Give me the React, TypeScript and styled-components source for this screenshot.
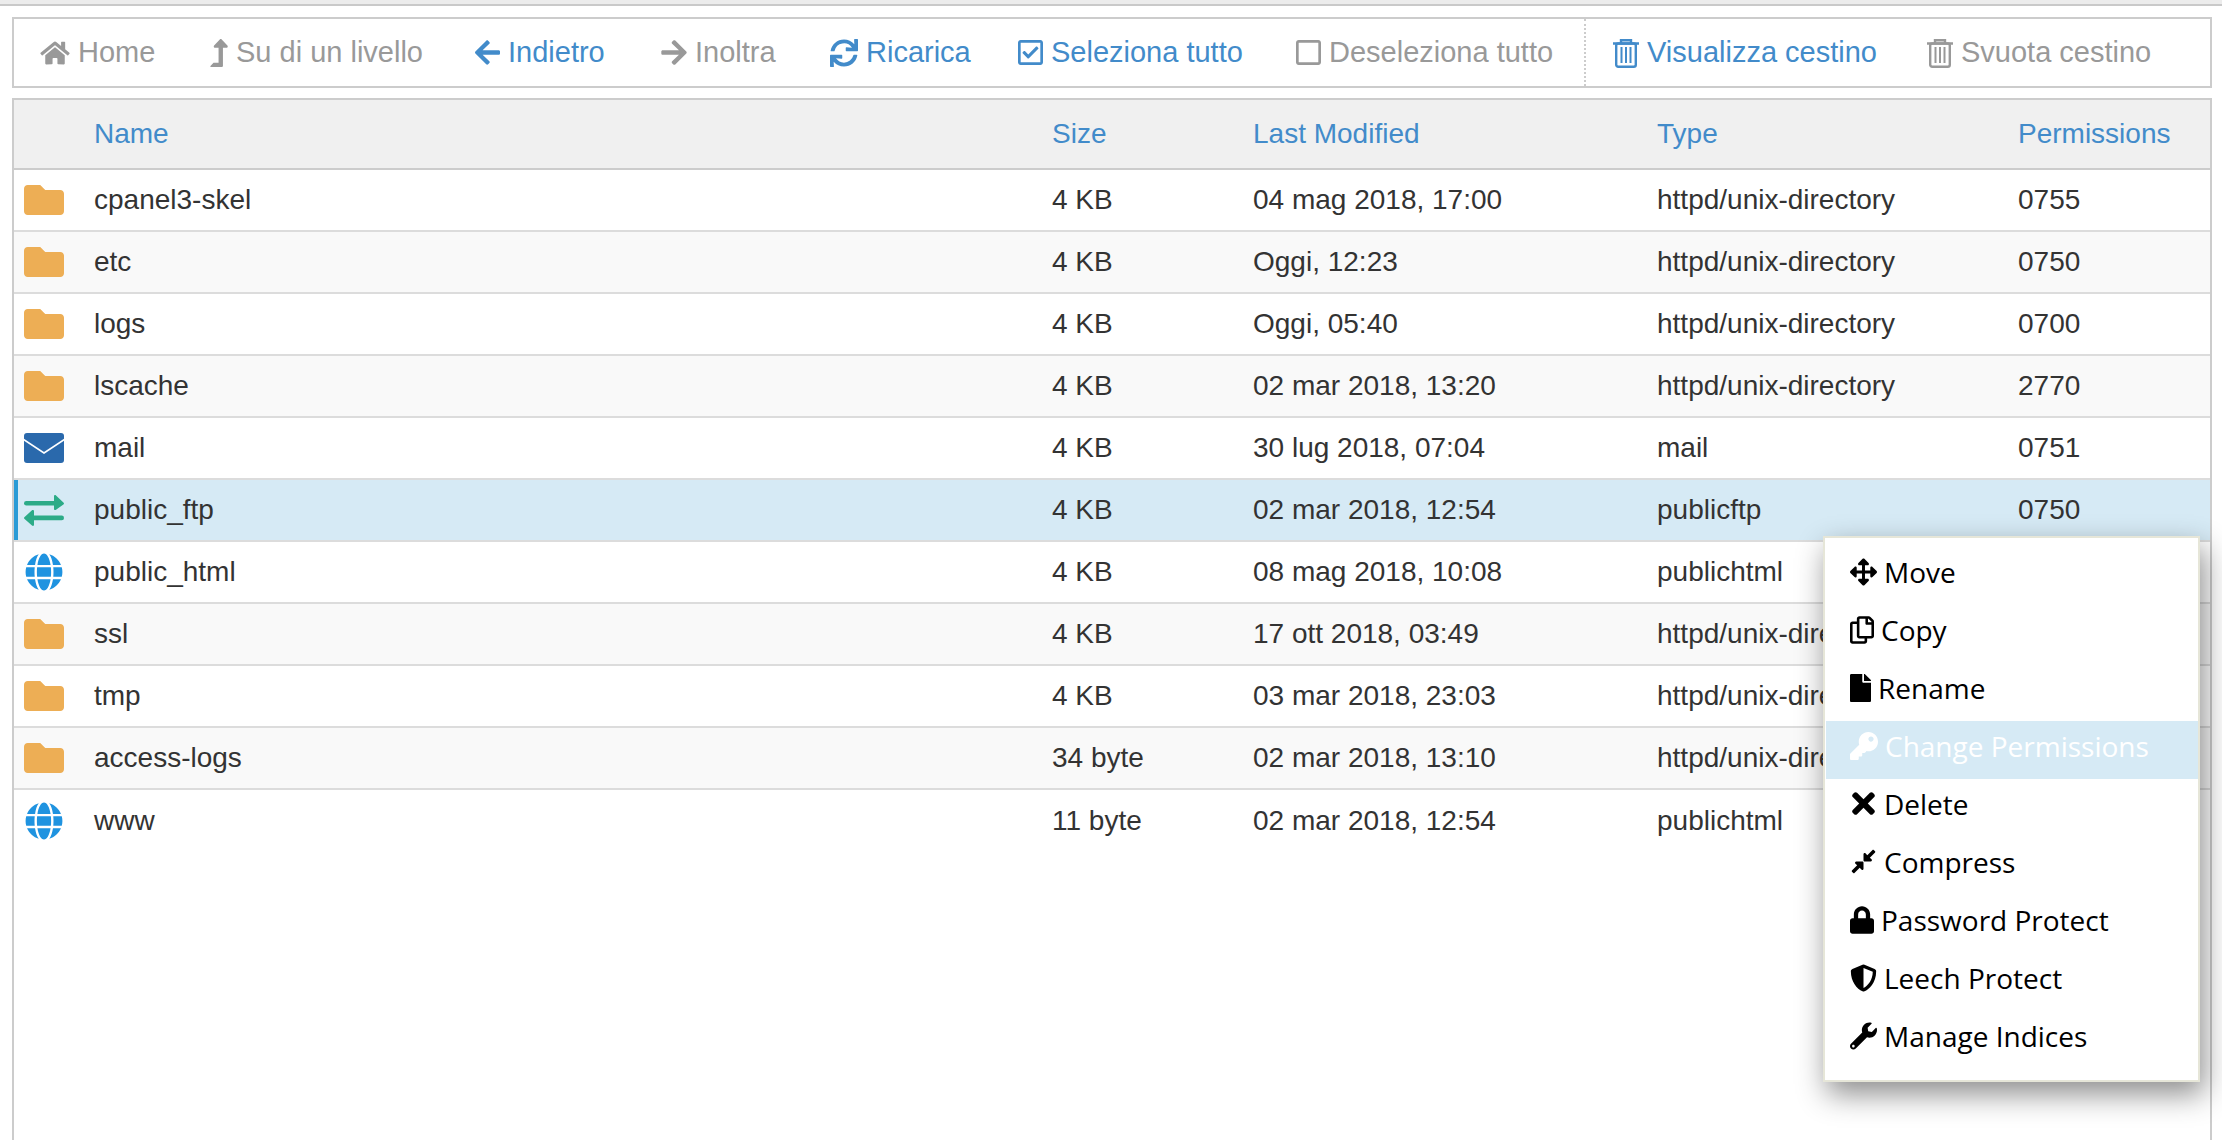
import styled, { createGlobalStyle } from "styled-components";
import {
  FaHome, FaLevelUpAlt, FaArrowLeft, FaArrowRight, FaSync, FaRegCheckSquare, FaRegSquare,
  FaFolder, FaGlobe, FaArrowsAlt, FaRegCopy, FaFile, FaKey, FaTimes, FaCompressAlt,
  FaLock, FaShieldAlt, FaWrench,
} from "react-icons/fa";
import type { ReactNode } from "react";

const GlobalStyle = createGlobalStyle`
  html, body { margin: 0; padding: 0; background: #fff; }
  body { font-family: "Liberation Sans", Arial, sans-serif; color: #333; overflow: hidden; }
`;

const Page = styled.div`
  position: relative;
  height: 1136px;
  display: flex;
  flex-direction: column;
  border-top: 2px solid #c9c9c9;
  box-sizing: border-box;
  padding: 11px 10px 0 12px;
  gap: 10px;
`;
const TopStrip = styled.div`
  height: 4px;
  background: #ececec;
`;
const Toolbar = styled.div`
  display: flex;
  align-items: stretch;
  height: 71px;
  box-sizing: border-box;
  border: 2px solid #ccc;
  padding-left: 2px;
`;
const ToolItem = styled.div<{ $on?: boolean; $w: number }>`
  display: flex;
  align-items: center;
  gap: 8px;
  width: ${p => p.$w}px;
  padding-left: 24px;
  box-sizing: border-box;
  font-size: 29px;
  white-space: nowrap;
  color: ${p => (p.$on ? "#428bca" : "#999")};
`;
const ToolDivider = styled.div`
  border-left: 2px dotted #ccc;
  margin: 0 3px 0 0;
`;
const Ico = styled.span<{ $w: number; $h: number }>`
  display: inline-flex;
  flex: none;
  width: ${p => p.$w}px;
  height: ${p => p.$h}px;
  svg { width: 100%; height: 100%; display: block; }
`;
const Table = styled.div`
  flex: 1;
  border: 2px solid #ccc;
  border-bottom: 0;
`;
const Row = styled.div<{ $selected?: boolean; $alt?: boolean }>`
  display: grid;
  grid-template-columns: 80px 958px 201px 404px 361px 1fr;
  align-items: center;
  height: 62px;
  box-sizing: border-box;
  border-bottom: 2px solid #dcdcdc;
  font-size: 28px;
  color: #333;
  background: ${p => (p.$selected ? "#d6eaf5" : p.$alt ? "#f9f9f9" : "#fff")};
  box-shadow: ${p => (p.$selected ? "inset 4px 0 0 #2a9bd6" : "none")};
  &:last-child { border-bottom: 0; }
`;
const HeadRow = styled(Row)`
  height: 70px;
  background: #f0f0f0;
  border-bottom: 2px solid #ccc;
  color: #428bca;
`;
const IconCell = styled.div`
  padding-left: 10px;
  display: flex;
  align-items: center;
`;
const FolderIco = styled(Ico)` color: #edae55; `;
const GlobeIco = styled(Ico)` color: #1f93e0; margin-left: 1px; `;
const Menu = styled.div`
  position: absolute;
  left: 1823px;
  top: 530px;
  width: 377px;
  height: 546px;
  box-sizing: border-box;
  background: #fff;
  border: 2px solid #e6e6d8;
  padding: 9px 0 0 1px;
  box-shadow: 4px 12px 28px rgba(0, 0, 0, 0.45);
  font-family: "Open Sans", sans-serif;
`;
const MenuItem = styled.div<{ $active?: boolean }>`
  display: flex;
  align-items: center;
  gap: 7px;
  height: 58px;
  width: 372px;
  padding: 0 0 9px 24px;
  box-sizing: border-box;
  font-size: 28px;
  color: ${p => (p.$active ? "#fff" : "#000")};
  background: ${p => (p.$active ? "#d6eaf5" : "transparent")};
`;

function Trash() {
  return (
    <svg viewBox="0 0 26 30" fill="none" stroke="currentColor" strokeWidth="2.4">
      <path d="M0 5.5h26M8 5.5V2.2h10v3.3" />
      <rect x="3.2" y="5.5" width="19.6" height="23.3" rx="2" />
      <path d="M8.5 9v16M13 9v16M17.5 9v16" strokeWidth="2" />
    </svg>
  );
}
function Mail() {
  return (
    <svg viewBox="0 0 40 30">
      <rect width="40" height="30" rx="3" fill="#2a69ac" />
      <path d="M-1 6l21 14 21-14" fill="none" stroke="#fff" strokeWidth="1.6" />
    </svg>
  );
}
function Exchange() {
  return (
    <svg viewBox="0 0 40 31" fill="#2cab87">
      <rect x="0" y="6" width="36" height="4.6" rx="2.3" />
      <path d="M30 1.2c0-1.2 1.2-1.5 2-.8l7.4 7c.8.7.8 1.3 0 2l-7.4 5.4c-.8.6-2 .3-2-.8z" />
      <rect x="4" y="20.6" width="36" height="4.6" rx="2.3" />
      <path d="M10 16.2c0-1.2-1.2-1.5-2-.9L.6 21.9c-.8.7-.8 1.3 0 2l7.4 6.7c.8.7 2 .4 2-.8z" />
    </svg>
  );
}

type Tool = { label: string; on?: boolean; w: number; iw: number; ih: number; icon: ReactNode };
const toolsA: Tool[] = [
  { label: "Home", w: 170, iw: 30, ih: 26, icon: <FaHome /> },
  { label: "Su di un livello", w: 265, iw: 18, ih: 28, icon: <FaLevelUpAlt /> },
  { label: "Indietro", on: true, w: 186, iw: 25, ih: 29, icon: <FaArrowLeft /> },
  { label: "Inoltra", w: 169, iw: 26, ih: 29, icon: <FaArrowRight /> },
  { label: "Ricarica", on: true, w: 188, iw: 28, ih: 28, icon: <FaSync /> },
  { label: "Seleziona tutto", on: true, w: 278, iw: 25, ih: 29, icon: <FaRegCheckSquare /> },
  { label: "Deseleziona tutto", w: 312, iw: 25, ih: 29, icon: <FaRegSquare /> },
];
const toolsB: Tool[] = [
  { label: "Visualizza cestino", on: true, w: 314, iw: 26, ih: 30, icon: <Trash /> },
  { label: "Svuota cestino", w: 280, iw: 26, ih: 30, icon: <Trash /> },
];

type Kind = "folder" | "mail" | "ftp" | "globe";
const files: [Kind, string, string, string, string, string][] = [
  ["folder", "cpanel3-skel", "4 KB", "04 mag 2018, 17:00", "httpd/unix-directory", "0755"],
  ["folder", "etc", "4 KB", "Oggi, 12:23", "httpd/unix-directory", "0750"],
  ["folder", "logs", "4 KB", "Oggi, 05:40", "httpd/unix-directory", "0700"],
  ["folder", "lscache", "4 KB", "02 mar 2018, 13:20", "httpd/unix-directory", "2770"],
  ["mail", "mail", "4 KB", "30 lug 2018, 07:04", "mail", "0751"],
  ["ftp", "public_ftp", "4 KB", "02 mar 2018, 12:54", "publicftp", "0750"],
  ["globe", "public_html", "4 KB", "08 mag 2018, 10:08", "publichtml", "0755"],
  ["folder", "ssl", "4 KB", "17 ott 2018, 03:49", "httpd/unix-directory", "0755"],
  ["folder", "tmp", "4 KB", "03 mar 2018, 23:03", "httpd/unix-directory", "0755"],
  ["folder", "access-logs", "34 byte", "02 mar 2018, 13:10", "httpd/unix-directory", "0777"],
  ["globe", "www", "11 byte", "02 mar 2018, 12:54", "publichtml", "0777"],
];

function FileIcon({ kind }: { kind: Kind }) {
  if (kind === "folder") return <FolderIco $w={40} $h={40}><FaFolder /></FolderIco>;
  if (kind === "mail") return <Ico $w={40} $h={30}><Mail /></Ico>;
  if (kind === "ftp") return <Ico $w={40} $h={31}><Exchange /></Ico>;
  return <GlobeIco $w={38} $h={38}><FaGlobe /></GlobeIco>;
}

const menu: { label: string; w: number; h: number; icon: ReactNode; active?: boolean }[] = [
  { label: "Move", w: 27, h: 28, icon: <FaArrowsAlt /> },
  { label: "Copy", w: 24, h: 28, icon: <FaRegCopy /> },
  { label: "Rename", w: 21, h: 28, icon: <FaFile /> },
  { label: "Change Permissions", w: 28, h: 28, icon: <FaKey />, active: true },
  { label: "Delete", w: 27, h: 33, icon: <FaTimes /> },
  { label: "Compress", w: 27, h: 27, icon: <FaCompressAlt /> },
  { label: "Password Protect", w: 24, h: 28, icon: <FaLock /> },
  { label: "Leech Protect", w: 27, h: 28, icon: <FaShieldAlt /> },
  { label: "Manage Indices", w: 27, h: 28, icon: <FaWrench /> },
];

function ToolRow({ tool }: { tool: Tool }) {
  return (
    <ToolItem $on={tool.on} $w={tool.w}>
      <Ico $w={tool.iw} $h={tool.ih}>{tool.icon}</Ico>
      {tool.label}
    </ToolItem>
  );
}

export default function App() {
  return (
    <>
      <GlobalStyle />
      <TopStrip />
      <Page>
        <Toolbar>
          {toolsA.map(t => <ToolRow key={t.label} tool={t} />)}
          <ToolDivider />
          {toolsB.map(t => <ToolRow key={t.label} tool={t} />)}
        </Toolbar>
        <Table>
          <HeadRow>
            <div />
            <div>Name</div>
            <div>Size</div>
            <div>Last Modified</div>
            <div>Type</div>
            <div>Permissions</div>
          </HeadRow>
          {files.map((f, i) => (
            <Row key={f[1]} $alt={i % 2 === 1} $selected={f[1] === "public_ftp"}>
              <IconCell><FileIcon kind={f[0]} /></IconCell>
              <div>{f[1]}</div>
              <div>{f[2]}</div>
              <div>{f[3]}</div>
              <div>{f[4]}</div>
              <div>{f[5]}</div>
            </Row>
          ))}
        </Table>
        <Menu>
          {menu.map(m => (
            <MenuItem key={m.label} $active={m.active}>
              <Ico $w={m.w} $h={m.h}>{m.icon}</Ico>
              {m.label}
            </MenuItem>
          ))}
        </Menu>
      </Page>
    </>
  );
}
